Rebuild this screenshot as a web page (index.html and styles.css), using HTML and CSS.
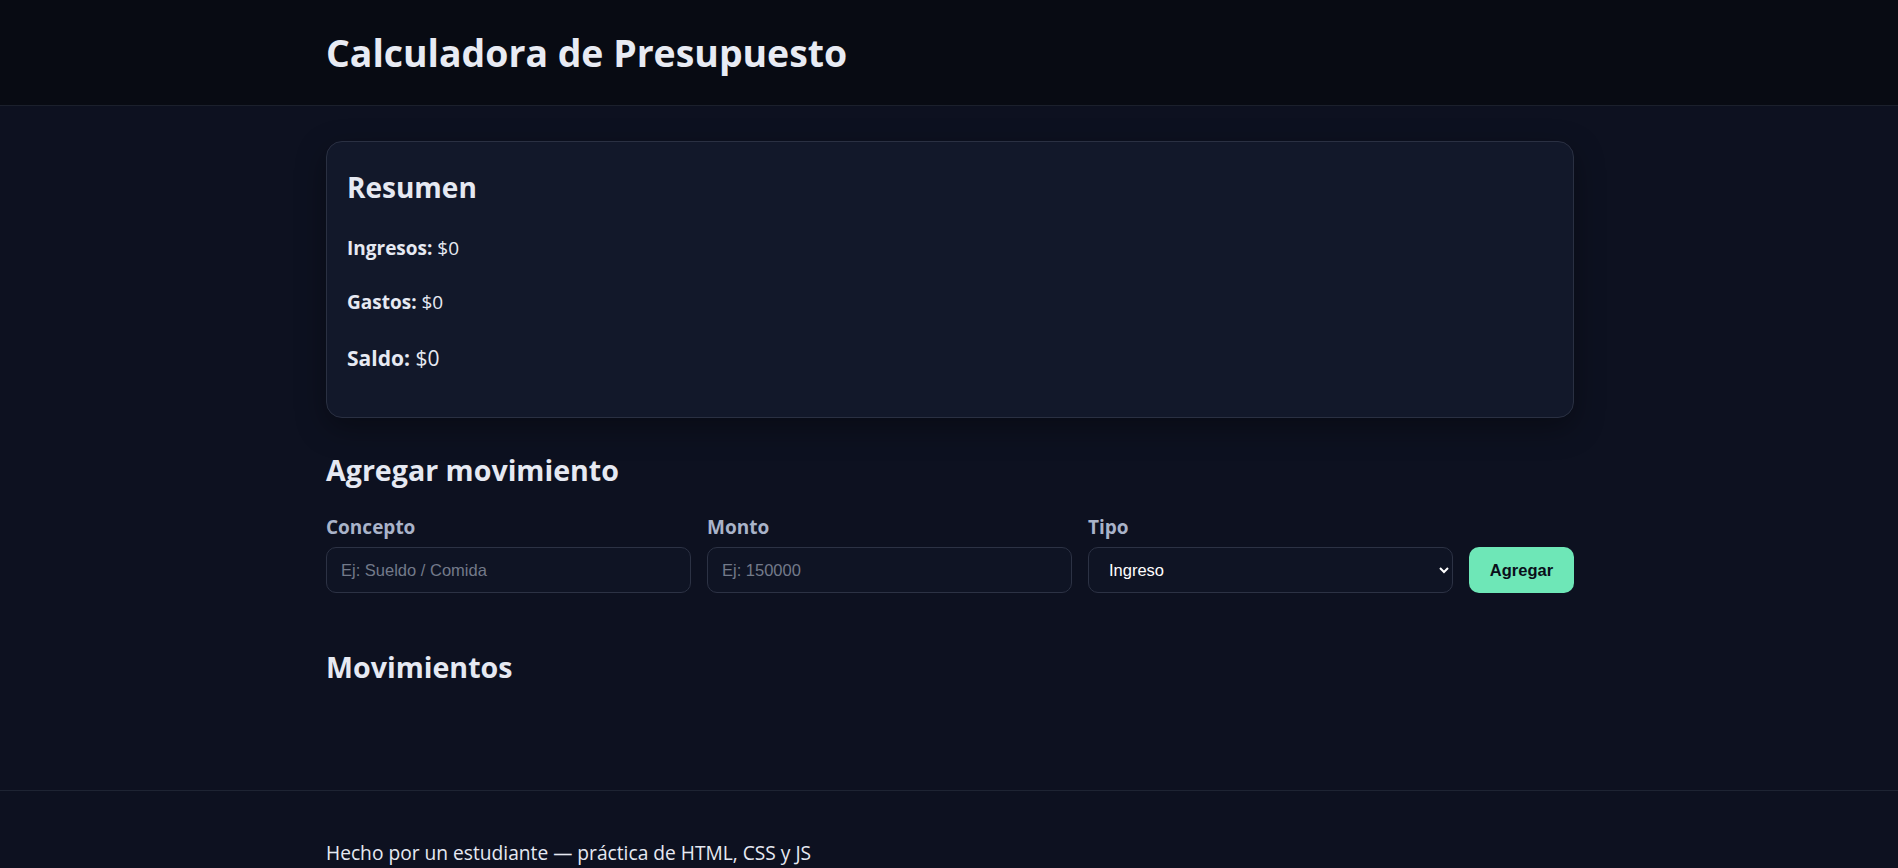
FILE: index.html
```html
<!DOCTYPE html>
<html lang="es">
<head>
<meta charset="utf-8">
<title>Calculadora de Presupuesto</title>
<link rel="stylesheet" href="styles.css">
</head>
<body>
<header class="site-header">
  <div class="container">
    <h1 class="title">Calculadora de Presupuesto</h1>
  </div>
</header>
<main class="container main">
  <section class="card">
    <h2 class="card-title">Resumen</h2>
    <p class="stat"><strong>Ingresos:</strong> $0</p>
    <p class="stat"><strong>Gastos:</strong> $0</p>
    <p class="stat stat-big"><strong>Saldo:</strong> $0</p>
  </section>

  <section class="add">
    <h2 class="section-title">Agregar movimiento</h2>
    <form class="form">
      <div class="field">
        <label class="label" for="concepto">Concepto</label>
        <input class="input" id="concepto" type="text" placeholder="Ej: Sueldo / Comida">
      </div>
      <div class="field">
        <label class="label" for="monto">Monto</label>
        <input class="input" id="monto" type="number" placeholder="Ej: 150000">
      </div>
      <div class="field">
        <label class="label" for="tipo">Tipo</label>
        <select class="input select" id="tipo">
          <option>Ingreso</option>
          <option>Gasto</option>
        </select>
      </div>
      <button class="btn" type="button">Agregar</button>
    </form>
  </section>

  <section class="list">
    <h2 class="section-title">Movimientos</h2>
  </section>
</main>
<footer class="site-footer">
  <div class="container">
    <p class="footer-text">Hecho por un estudiante — práctica de HTML, CSS y JS</p>
  </div>
</footer>
</body>
</html>
```

FILE: styles.css
```css
* { box-sizing: border-box; }

html, body {
  margin: 0;
  padding: 0;
}

body {
  background: #0d1120;
  color: #e6e9f2;
  font-family: "Open Sans", "Noto Sans", sans-serif;
  font-size: 19px;
}

.container {
  width: 1248px;
  margin: 0 auto;
  position: relative;
  left: 1px;
}

.site-header {
  background: #080b13;
  border-bottom: 1px solid #1b202c;
  padding: 26px 0 26px;
}

.title {
  margin: 0;
  font-size: 37.4px;
  line-height: 53px;
  font-weight: 700;
  color: #e8ebf3;
}

.main {
  padding-top: 35px;
}

.card {
  background: #12182a;
  border: 1px solid #2a3042;
  border-radius: 16px;
  padding: 21px 20px 44px;
  box-shadow: 0 10px 30px rgba(0, 0, 0, 0.35);
}

.card-title {
  margin: 6px 0 30px;
  font-size: 28px;
  line-height: 36px;
  font-weight: 700;
}

.stat {
  margin: 0 0 27px;
  line-height: 27px;
  font-size: 19px;
}

.stat-big {
  margin-bottom: 0;
  font-size: 21px;
  line-height: 30px;
}

.stat strong { font-weight: 700; }

.add {
  margin-top: 34px;
}

.section-title {
  margin: 0;
  font-size: 28.6px;
  line-height: 36px;
  font-weight: 700;
}

.form {
  margin-top: 27px;
  display: grid;
  grid-template-columns: 1fr 1fr 1fr 105px;
  gap: 16px;
  align-items: end;
}

.field {
  display: flex;
  flex-direction: column;
  gap: 8px;
}

.label {
  font-size: 19px;
  line-height: 24px;
  font-weight: 700;
  color: #a9b3c9;
}

.input {
  height: 46px;
  background: #0f1424;
  border: 1px solid #2c3244;
  border-radius: 10px;
  color: #e6e9f2;
  font-family: "Liberation Sans", Arial, sans-serif;
  font-size: 16.5px;
  padding: 0 14px;
  color-scheme: dark;
  outline: none;
}

.input::placeholder {
  color: #737a8a;
}

.select {
  padding: 0 16px;
  color: #ffffff;
}

.btn {
  height: 46px;
  width: 105px;
  border: 0;
  border-radius: 10px;
  background: #6ee7b7;
  color: #0a0f1a;
  font-family: "Liberation Sans", Arial, sans-serif;
  font-weight: 700;
  font-size: 16.5px;
  cursor: pointer;
}

.list {
  margin-top: 56px;
  padding-bottom: 105px;
}

.site-footer {
  border-top: 1px solid #1e2433;
  padding: 48px 0 30px;
}

.footer-text {
  margin: 0;
  line-height: 27px;
  font-size: 19.2px;
}
```
